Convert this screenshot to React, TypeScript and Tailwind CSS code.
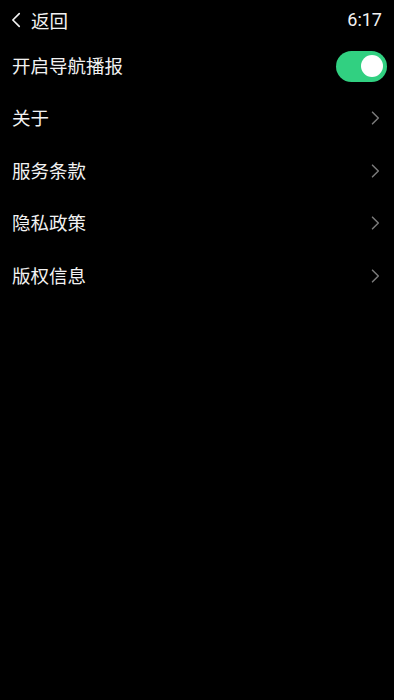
import React, { useState } from 'react';

const FONT = { fontFamily: '"Noto Sans CJK SC", "Noto Sans", sans-serif' };

const Chevron: React.FC<{ dir?: 'left' | 'right'; className?: string }> = ({ dir = 'right', className }) => (
  <svg viewBox="0 0 12 18" className={className} fill="none" stroke="currentColor" strokeWidth={1.8} strokeLinecap="round" strokeLinejoin="round">
    {dir === 'right' ? <path d="M3 2l7 7-7 7" /> : <path d="M9 2L2 9l7 7" />}
  </svg>
);

const ITEMS = ['关于', '服务条款', '隐私政策', '版权信息'];

export default function App() {
  const [on, setOn] = useState(true);

  return (
    <div className="w-full min-h-[700px] bg-black text-[#f2f2f2]" style={FONT}>
      {/* Header */}
      <div className="h-10 flex items-center justify-between pl-[11px] pr-[12px]">
        <div className="flex items-center gap-[9px]">
          <Chevron dir="left" className="w-[11px] h-[18px] text-[#f2f2f2]" />
          <span className="text-[18.5px] leading-none">返回</span>
        </div>
        <span className="text-[18px] leading-none" style={{ fontFamily: '"Roboto", sans-serif' }}>6:17</span>
      </div>

      {/* Toggle row */}
      <div className="h-[52px] flex items-center justify-between pl-3 pr-[7px]">
        <span className="text-[18.5px]">开启导航播报</span>
        <button
          onClick={() => setOn(!on)}
          className={`w-[51px] h-[31px] rounded-full flex items-center px-[4px] ${on ? 'bg-[#31d081] justify-end' : 'bg-[#555] justify-start'}`}
        >
          <span className="w-[22px] h-[22px] rounded-full bg-white" />
        </button>
      </div>

      {/* Menu rows */}
      {ITEMS.map(label => (
        <div key={label} className="h-[52.5px] flex items-center justify-between pl-3 pr-[14px]">
          <span className="text-[18.5px]">{label}</span>
          <Chevron className="w-[10px] h-[18px] text-[#7a7a7a]" />
        </div>
      ))}
    </div>
  );
}
